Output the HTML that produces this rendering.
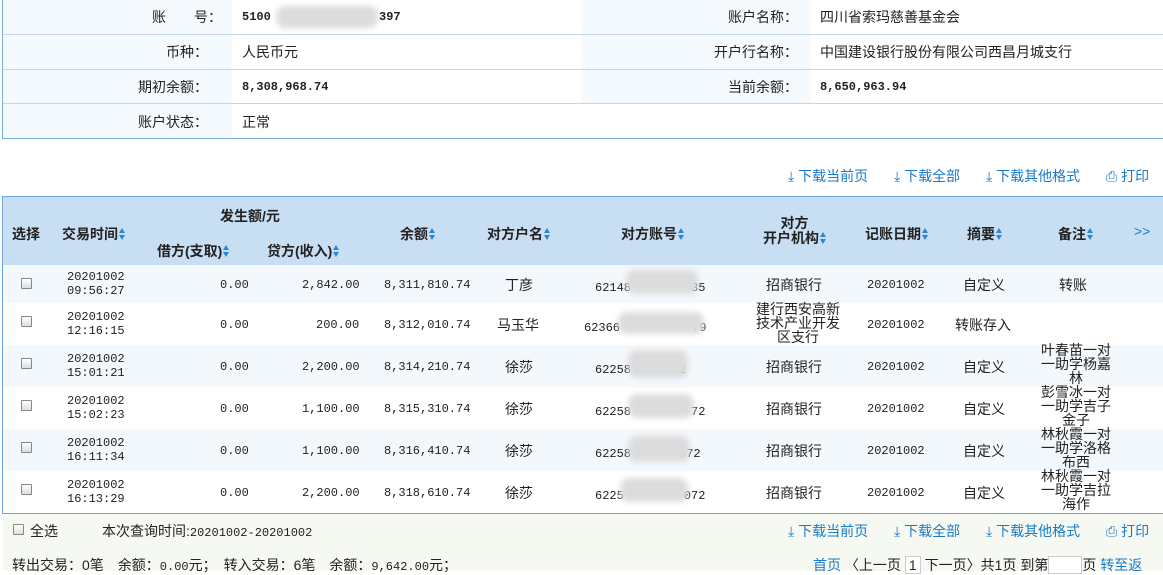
<!DOCTYPE html>
<html><head><meta charset="utf-8"><style>
*{margin:0;padding:0;box-sizing:border-box}
body{width:1163px;height:571px;overflow:hidden;background:#fff;font-family:"Liberation Sans","Noto Sans CJK SC",sans-serif;font-size:14px;color:#222;position:relative}
.a{position:absolute;white-space:nowrap}
.m{font-family:"Liberation Mono","Noto Sans CJK SC",monospace;font-size:12px}
.b{font-weight:bold}
.lnk{color:#1a7ac8}
.blur{position:absolute;background:#dcdcdc;border-radius:9px;filter:blur(3px)}
.s{display:inline-block;width:6px;height:12px;position:relative;vertical-align:-1px;margin-left:1px}
.s:before{content:"";position:absolute;left:0;top:0;border-left:3px solid transparent;border-right:3px solid transparent;border-bottom:5px solid #2a86d6}
.s:after{content:"";position:absolute;left:0;top:7px;border-left:3px solid transparent;border-right:3px solid transparent;border-top:5px solid #2a86d6}
.cb{position:absolute;width:11px;height:11px;border:1px solid #888;background:linear-gradient(#fff,#ddd);border-radius:1px}
.th{font-weight:bold;font-size:14px;color:#222}
</style></head><body>
<div class="a" style="left:2px;top:0;width:1161px;height:139px;border:1px solid #7aaee0;border-top:none;border-right:none"></div>
<div class="a" style="left:3px;top:0;width:229px;height:138px;background:#f4f9fd"></div>
<div class="a" style="left:582px;top:0;width:228px;height:104px;background:#f4f9fd"></div>
<div class="a" style="left:3px;top:34px;width:1160px;height:1px;background:#c5d6e6"></div>
<div class="a" style="left:3px;top:69px;width:1160px;height:1px;background:#c5d6e6"></div>
<div class="a" style="left:3px;top:103px;width:1160px;height:1px;background:#c5d6e6"></div>
<div class="a" style="left:152px;top:7px">账　　号：</div>
<div class="a" style="left:166px;top:42px">币种：</div>
<div class="a" style="left:138px;top:77px">期初余额：</div>
<div class="a" style="left:138px;top:112px">账户状态：</div>
<div class="a m b" style="left:242px;top:10px">5100</div>
<div class="blur" style="left:276px;top:6px;width:102px;height:22px"></div>
<div class="a m b" style="left:379px;top:10px">397</div>
<div class="a" style="left:242px;top:42px">人民币元</div>
<div class="a m b" style="left:242px;top:80px">8,308,968.74</div>
<div class="a" style="left:242px;top:112px">正常</div>
<div class="a" style="left:728px;top:7px">账户名称：</div>
<div class="a" style="left:714px;top:42px">开户行名称：</div>
<div class="a" style="left:728px;top:77px">当前余额：</div>
<div class="a" style="left:820px;top:7px">四川省索玛慈善基金会</div>
<div class="a" style="left:820px;top:42px">中国建设银行股份有限公司西昌月城支行</div>
<div class="a m b" style="left:820px;top:80px">8,650,963.94</div>
<div class="a lnk" style="left:788px;top:166px">⤓ 下载当前页</div>
<div class="a lnk" style="left:894px;top:166px">⤓ 下载全部</div>
<div class="a lnk" style="left:986px;top:166px">⤓ 下载其他格式</div>
<div class="a lnk" style="left:1106px;top:166px">⎙ 打印</div>
<div class="a" style="left:2px;top:196px;width:1161px;height:318px;border:1px solid #6aa6df;border-right:none"></div>
<div class="a" style="left:3px;top:197px;width:1160px;height:68px;background:#c8dff3"></div>
<div class="a th" style="left:12px;top:224px">选择</div>
<div class="a th" style="left:62px;top:224px">交易时间<span class="s"></span></div>
<div class="a th" style="left:220px;top:206px">发生额/元</div>
<div class="a th" style="left:157px;top:241px">借方(支取)<span class="s"></span></div>
<div class="a th" style="left:267px;top:241px">贷方(收入)<span class="s"></span></div>
<div class="a th" style="left:400px;top:224px">余额<span class="s"></span></div>
<div class="a th" style="left:487px;top:224px">对方户名<span class="s"></span></div>
<div class="a th" style="left:621px;top:224px">对方账号<span class="s"></span></div>
<div class="a th" style="left:763px;top:216px;line-height:15px;text-align:center">对方<br>开户机构<span class="s"></span></div>
<div class="a th" style="left:865px;top:224px">记账日期<span class="s"></span></div>
<div class="a th" style="left:967px;top:224px">摘要<span class="s"></span></div>
<div class="a th" style="left:1058px;top:224px">备注<span class="s"></span></div>
<div class="a lnk" style="left:1134px;top:223px;font-size:14px">&gt;&gt;</div>
<div class="a" style="left:3px;top:265px;width:1160px;height:38px;background:#f3f8fc"></div>
<div class="a" style="left:3px;top:345px;width:1160px;height:42px;background:#f3f8fc"></div>
<div class="a" style="left:3px;top:429px;width:1160px;height:42px;background:#f3f8fc"></div>
<div class="a" style="left:3px;top:514px;width:1160px;height:57px;background:#f6f9f2"></div>

<div class="cb" style="left:21px;top:278px"></div>
<div class="a m" style="left:67px;top:270px;line-height:14px">20201002<br>09:56:27</div>
<div class="a m" style="left:220px;top:278px">0.00</div>
<div class="a m" style="left:302px;top:278px">2,842.00</div>
<div class="a m" style="left:384px;top:278px">8,311,810.74</div>
<div class="a" style="left:505px;top:275px">丁彦</div>
<div class="a m" style="left:595px;top:278px">62148　　　　　35</div>
<div class="blur" style="left:626px;top:270px;width:72px;height:24px"></div>
<div class="a" style="left:766px;top:275px">招商银行</div>
<div class="a m" style="left:867px;top:278px">20201002</div>
<div class="a" style="left:963px;top:275px">自定义</div>
<div class="a" style="left:1059px;top:275px">转账</div>

<div class="cb" style="left:21px;top:316px"></div>
<div class="a m" style="left:67px;top:310px;line-height:14px">20201002<br>12:16:15</div>
<div class="a m" style="left:220px;top:318px">0.00</div>
<div class="a m" style="left:316px;top:318px">200.00</div>
<div class="a m" style="left:384px;top:318px">8,312,010.74</div>
<div class="a" style="left:497px;top:315px">马玉华</div>
<div class="a m" style="left:584px;top:318px">62366　　　　　　79</div>
<div class="blur" style="left:618px;top:312px;width:86px;height:22px"></div>
<div class="a" style="left:756px;top:302px;line-height:14px;text-align:center">建行西安高新<br>技术产业开发<br>区支行</div>
<div class="a m" style="left:867px;top:318px">20201002</div>
<div class="a" style="left:955px;top:315px">转账存入</div>

<div class="cb" style="left:21px;top:358px"></div>
<div class="a m" style="left:67px;top:352px;line-height:14px">20201002<br>15:01:21</div>
<div class="a m" style="left:220px;top:360px">0.00</div>
<div class="a m" style="left:302px;top:360px">2,200.00</div>
<div class="a m" style="left:384px;top:360px">8,314,210.74</div>
<div class="a" style="left:505px;top:357px">徐莎</div>
<div class="a m" style="left:595px;top:360px">62258　　　　2</div>
<div class="blur" style="left:628px;top:350px;width:60px;height:28px"></div>
<div class="a" style="left:766px;top:357px">招商银行</div>
<div class="a m" style="left:867px;top:360px">20201002</div>
<div class="a" style="left:963px;top:357px">自定义</div>
<div class="a" style="left:1041px;top:343px;line-height:14px;text-align:center">叶春苗一对<br>一助学杨嘉<br>林</div>

<div class="cb" style="left:21px;top:400px"></div>
<div class="a m" style="left:67px;top:394px;line-height:14px">20201002<br>15:02:23</div>
<div class="a m" style="left:220px;top:402px">0.00</div>
<div class="a m" style="left:302px;top:402px">1,100.00</div>
<div class="a m" style="left:384px;top:402px">8,315,310.74</div>
<div class="a" style="left:505px;top:399px">徐莎</div>
<div class="a m" style="left:595px;top:402px">62258　　　　　72</div>
<div class="blur" style="left:628px;top:394px;width:66px;height:24px"></div>
<div class="a" style="left:766px;top:399px">招商银行</div>
<div class="a m" style="left:867px;top:402px">20201002</div>
<div class="a" style="left:963px;top:399px">自定义</div>
<div class="a" style="left:1041px;top:385px;line-height:14px;text-align:center">彭雪冰一对<br>一助学吉子<br>金子</div>

<div class="cb" style="left:21px;top:442px"></div>
<div class="a m" style="left:67px;top:436px;line-height:14px">20201002<br>16:11:34</div>
<div class="a m" style="left:220px;top:444px">0.00</div>
<div class="a m" style="left:302px;top:444px">1,100.00</div>
<div class="a m" style="left:384px;top:444px">8,316,410.74</div>
<div class="a" style="left:505px;top:441px">徐莎</div>
<div class="a m" style="left:595px;top:444px">62258　　　　072</div>
<div class="blur" style="left:628px;top:436px;width:62px;height:26px"></div>
<div class="a" style="left:766px;top:441px">招商银行</div>
<div class="a m" style="left:867px;top:444px">20201002</div>
<div class="a" style="left:963px;top:441px">自定义</div>
<div class="a" style="left:1041px;top:427px;line-height:14px;text-align:center">林秋霞一对<br>一助学洛格<br>布西</div>

<div class="cb" style="left:21px;top:484px"></div>
<div class="a m" style="left:67px;top:478px;line-height:14px">20201002<br>16:13:29</div>
<div class="a m" style="left:220px;top:486px">0.00</div>
<div class="a m" style="left:302px;top:486px">2,200.00</div>
<div class="a m" style="left:384px;top:486px">8,318,610.74</div>
<div class="a" style="left:505px;top:483px">徐莎</div>
<div class="a m" style="left:595px;top:486px">6225　　　　　072</div>
<div class="blur" style="left:620px;top:478px;width:68px;height:24px"></div>
<div class="a" style="left:766px;top:483px">招商银行</div>
<div class="a m" style="left:867px;top:486px">20201002</div>
<div class="a" style="left:963px;top:483px">自定义</div>
<div class="a" style="left:1041px;top:469px;line-height:14px;text-align:center">林秋霞一对<br>一助学吉拉<br>海作</div>

<div class="cb" style="left:13px;top:524px"></div>
<div class="a" style="left:30px;top:521px">全选</div>
<div class="a" style="left:102px;top:521px">本次查询时间:<span class="m">20201002-20201002</span></div>
<div class="a lnk" style="left:788px;top:521px">⤓ 下载当前页</div>
<div class="a lnk" style="left:894px;top:521px">⤓ 下载全部</div>
<div class="a lnk" style="left:986px;top:521px">⤓ 下载其他格式</div>
<div class="a lnk" style="left:1106px;top:521px">⎙ 打印</div>
<div class="a" style="left:12px;top:555px">转出交易：0笔　余额：<span class="m">0.00</span>元；　转入交易：6笔　余额：<span class="m">9,642.00</span>元；</div>
<div class="a" style="left:813px;top:555px"><span class="lnk">首页</span> 〈上一页 <span style="display:inline-block;width:16px;height:18px;border:1px solid #ccc;background:#fff;text-align:center">1</span> 下一页〉共1页 到第<span style="display:inline-block;width:34px;height:18px;border:1px solid #ccc;background:#fff;vertical-align:-4px"></span>页 <span class="lnk">转至返</span></div>
</body></html>
